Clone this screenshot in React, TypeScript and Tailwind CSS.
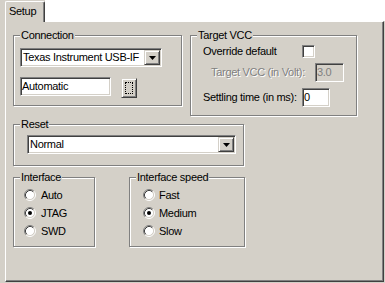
import React from "react";

const sunken =
  "border border-t-[#808080] border-l-[#808080] border-r-white border-b-white shadow-[inset_1px_1px_0_#404040,inset_-1px_-1px_0_#d4d0c8]";
const raised =
  "border border-t-[#d4d0c8] border-l-[#d4d0c8] border-r-[#404040] border-b-[#404040] shadow-[inset_1px_1px_0_#ffffff,inset_-1px_-1px_0_#808080] bg-[#d4d0c8]";

function Group({
  label,
  className,
  children,
}: {
  label: string;
  className: string;
  children?: React.ReactNode;
}) {
  return (
    <div
      className={
        "relative border border-[#808080] shadow-[1px_1px_0_#ffffff,inset_1px_1px_0_#ffffff] " +
        className
      }
    >
      <span className="absolute left-[6px] top-[-7px] bg-[#d4d0c8] px-[1px] leading-[13px] whitespace-nowrap">
        {label}
      </span>
      {children}
    </div>
  );
}

function Arrow() {
  return (
    <svg width="7" height="4" viewBox="0 0 7 4">
      <path d="M0 0h7L3.5 4z" fill="#000" />
    </svg>
  );
}

function Combo({ text, className }: { text: string; className: string }) {
  return (
    <div className={"flex bg-white p-[1px] " + sunken + " " + className}>
      <div className="flex flex-1 items-center pl-[1px] leading-[13px] whitespace-nowrap overflow-hidden">
        {text}
      </div>
      <div className={"flex w-[16px] items-center justify-center " + raised}>
        <Arrow />
      </div>
    </div>
  );
}

function Radio({ label, checked, gap }: { label: string; checked?: boolean; gap: string }) {
  return (
    <div className={"flex h-[18px] items-center " + gap}>
      <svg width="12" height="12" viewBox="0 0 12 12" className="shrink-0">
        <circle cx="6" cy="6" r="4.5" fill="#fff" />
        <path d="M2.11 9.89A5.5 5.5 0 0 1 9.89 2.11" fill="none" stroke="#808080" />
        <path d="M9.89 2.11A5.5 5.5 0 0 1 2.11 9.89" fill="none" stroke="#ffffff" />
        <path d="M2.82 9.18A4.5 4.5 0 0 1 9.18 2.82" fill="none" stroke="#404040" />
        <path d="M9.18 2.82A4.5 4.5 0 0 1 2.82 9.18" fill="none" stroke="#d4d0c8" />
        {checked && <circle cx="6" cy="6" r="2" fill="#000" />}
      </svg>
      <span className="leading-[13px]">{label}</span>
    </div>
  );
}

export default function App() {
  return (
    <div
      className="flex h-[283px] w-[385px] flex-col bg-[#d4d0c8] text-[11px] tracking-[-0.3px] text-black"
      style={{ fontFamily: '"Liberation Sans", Arial, sans-serif' }}
    >
      {/* tab strip */}
      <div className="flex h-[21px] shrink-0">
        <div className="w-[5px] bg-[#d4d0c8]" />
        <div className="relative z-10 -mb-px flex h-[21px] w-[40px] mt-[1px] items-start rounded-tl-[2px] rounded-tr-[2px] border-l border-t border-r border-l-white border-t-white border-r-[#404040] bg-[#d4d0c8] pl-[3px] pt-[3px] shadow-[inset_-1px_0_0_#808080]">
          <span className="leading-[13px]">Setup</span>
        </div>
        <div className="flex-1 bg-white" />
      </div>

      {/* panel */}
      <div className="ml-[5px] flex h-[261px] w-[379px] flex-col border border-l-white border-t-white border-r-[#404040] border-b-[#404040] pl-[7px] pt-[13px] shadow-[inset_-1px_-1px_0_#808080]">
        {/* row 1 */}
        <div className="flex items-start">
          <Group label="Connection" className="h-[71px] w-[169px] pl-[6px] pt-[12px]">
            <Combo text="Texas Instrument USB-IF" className="h-[19px] w-[142px]" />
            <div className="mt-[10px] flex items-start">
              <div className={"flex h-[19px] w-[91px] items-center bg-white pl-[1px] " + sunken}>
                <span className="leading-[13px]">Automatic</span>
              </div>
              <div className={"ml-[10px] mt-[1px] h-[20px] w-[16px] p-[3px] " + raised}>
                <div className="h-full w-full border border-dotted border-black" />
              </div>
            </div>
          </Group>

          <Group label="Target VCC" className="ml-[8px] h-[81px] w-[167px] pt-[9px]">
            <div className="flex h-[13px] items-center pl-[12px]">
              <span className="w-[99px] leading-[13px]">Override default</span>
              <div className={"h-[13px] w-[13px] bg-white " + sunken} />
            </div>
            <div className="mt-[5px] flex h-[19px] items-center pl-[20px]">
              <span className="w-[104px] leading-[13px] text-[#808080] [text-shadow:1px_1px_0_#ffffff]">
                Target VCC (in Volt):
              </span>
              <div className={"flex h-[19px] w-[29px] items-center bg-[#d4d0c8] pl-[1px] text-[#808080] " + sunken}>
                <span className="leading-[13px]">3.0</span>
              </div>
            </div>
            <div className="mt-[6px] flex h-[19px] items-center pl-[12px]">
              <span className="w-[99px] leading-[13px]">Settling time (in ms):</span>
              <div className={"flex h-[19px] w-[28px] items-center bg-white pl-[1px] " + sunken}>
                <span className="leading-[13px]">0</span>
              </div>
            </div>
          </Group>
        </div>

        {/* row 2 */}
        <Group label="Reset" className="mt-[8px] h-[42px] w-[231px] pl-[13px] pt-[10px]">
          <Combo text="Normal" className="h-[19px] w-[209px]" />
        </Group>

        {/* row 3 */}
        <div className="mt-[11px] flex items-start">
          <Group label="Interface" className="h-[70px] w-[82px] pl-[10px] pt-[8px]">
            <Radio label="Auto" gap="gap-[5px]" />
            <Radio label="JTAG" checked gap="gap-[5px]" />
            <Radio label="SWD" gap="gap-[5px]" />
          </Group>
          <Group label="Interface speed" className="ml-[34px] h-[70px] w-[116px] pl-[13px] pt-[8px]">
            <Radio label="Fast" gap="gap-[4px]" />
            <Radio label="Medium" checked gap="gap-[4px]" />
            <Radio label="Slow" gap="gap-[4px]" />
          </Group>
        </div>
      </div>
    </div>
  );
}
